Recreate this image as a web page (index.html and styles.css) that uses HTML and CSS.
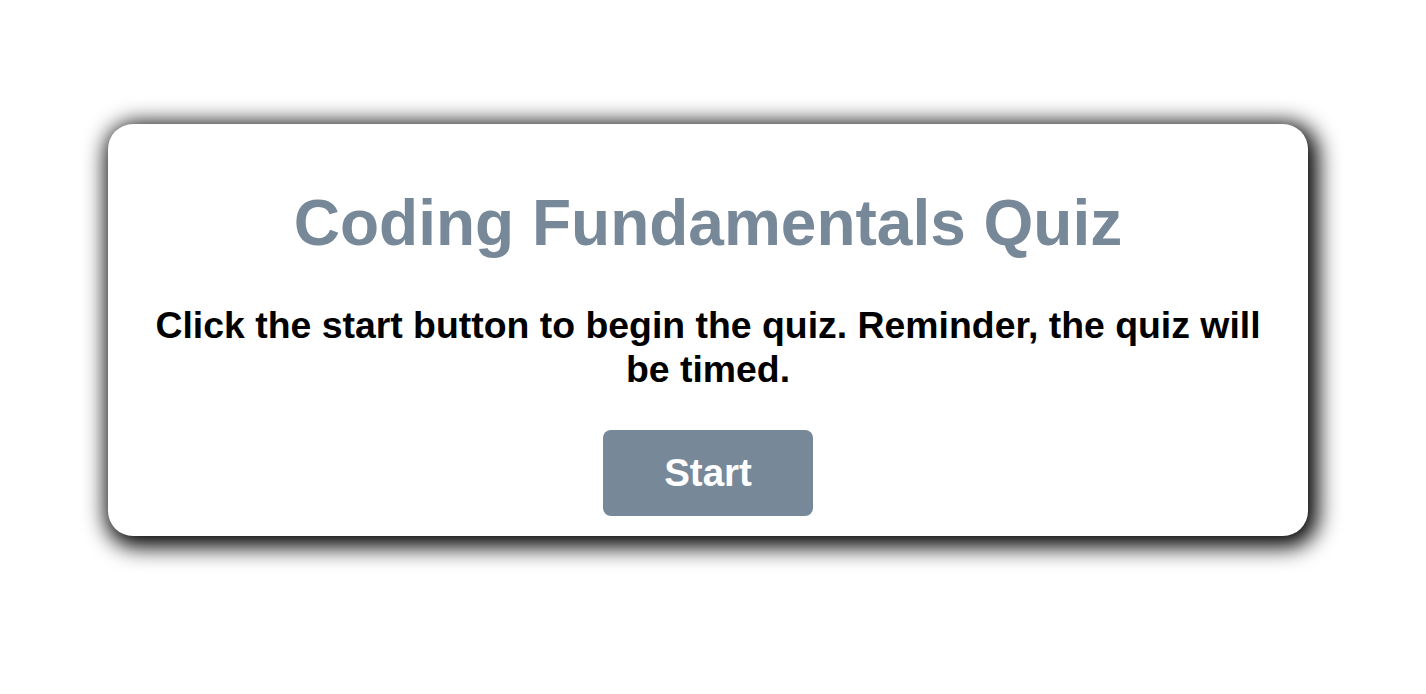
FILE: index.html
```html
<!DOCTYPE html>
<html lang="en">
<head>
<meta charset="utf-8">
<title>Coding Fundamentals Quiz</title>
<link rel="stylesheet" href="styles.css">
</head>
<body>
<main class="card">
  <h1 class="title">Coding Fundamentals Quiz</h1>
  <p class="intro">Click the start button to begin the quiz. Reminder, the quiz will be timed.</p>
  <button class="start-btn" type="button">Start</button>
</main>
</body>
</html>
```

FILE: styles.css
```css
html, body {
  margin: 0;
  padding: 0;
  background: #ffffff;
}

body {
  box-sizing: border-box;
  min-height: 100vh;
  font-family: "Liberation Sans", Arial, Helvetica, sans-serif;
  padding: 124px 0 0 108px;
}

.card {
  box-sizing: border-box;
  width: 1200px;
  height: 412px;
  background: #ffffff;
  border-radius: 25px;
  box-shadow: 4px 5px 22px 6px #000000;
  padding: 0 40px 20px;
  display: flex;
  flex-direction: column;
  align-items: center;
  text-align: center;
}

.title {
  margin: 62px 0 0;
  font-size: 64px;
  line-height: 74px;
  font-weight: 700;
  color: #778899;
}

.intro {
  margin: 43px 0 0;
  font-size: 37.4px;
  line-height: 44px;
  font-weight: 700;
  color: #000000;
}

.start-btn {
  margin-top: 39px;
  width: 210px;
  height: 86px;
  border: none;
  border-radius: 8px;
  background: #778899;
  color: #ffffff;
  font-family: "Liberation Sans", Arial, Helvetica, sans-serif;
  font-size: 38.5px;
  font-weight: 700;
  padding: 0;
  cursor: pointer;
}
```
